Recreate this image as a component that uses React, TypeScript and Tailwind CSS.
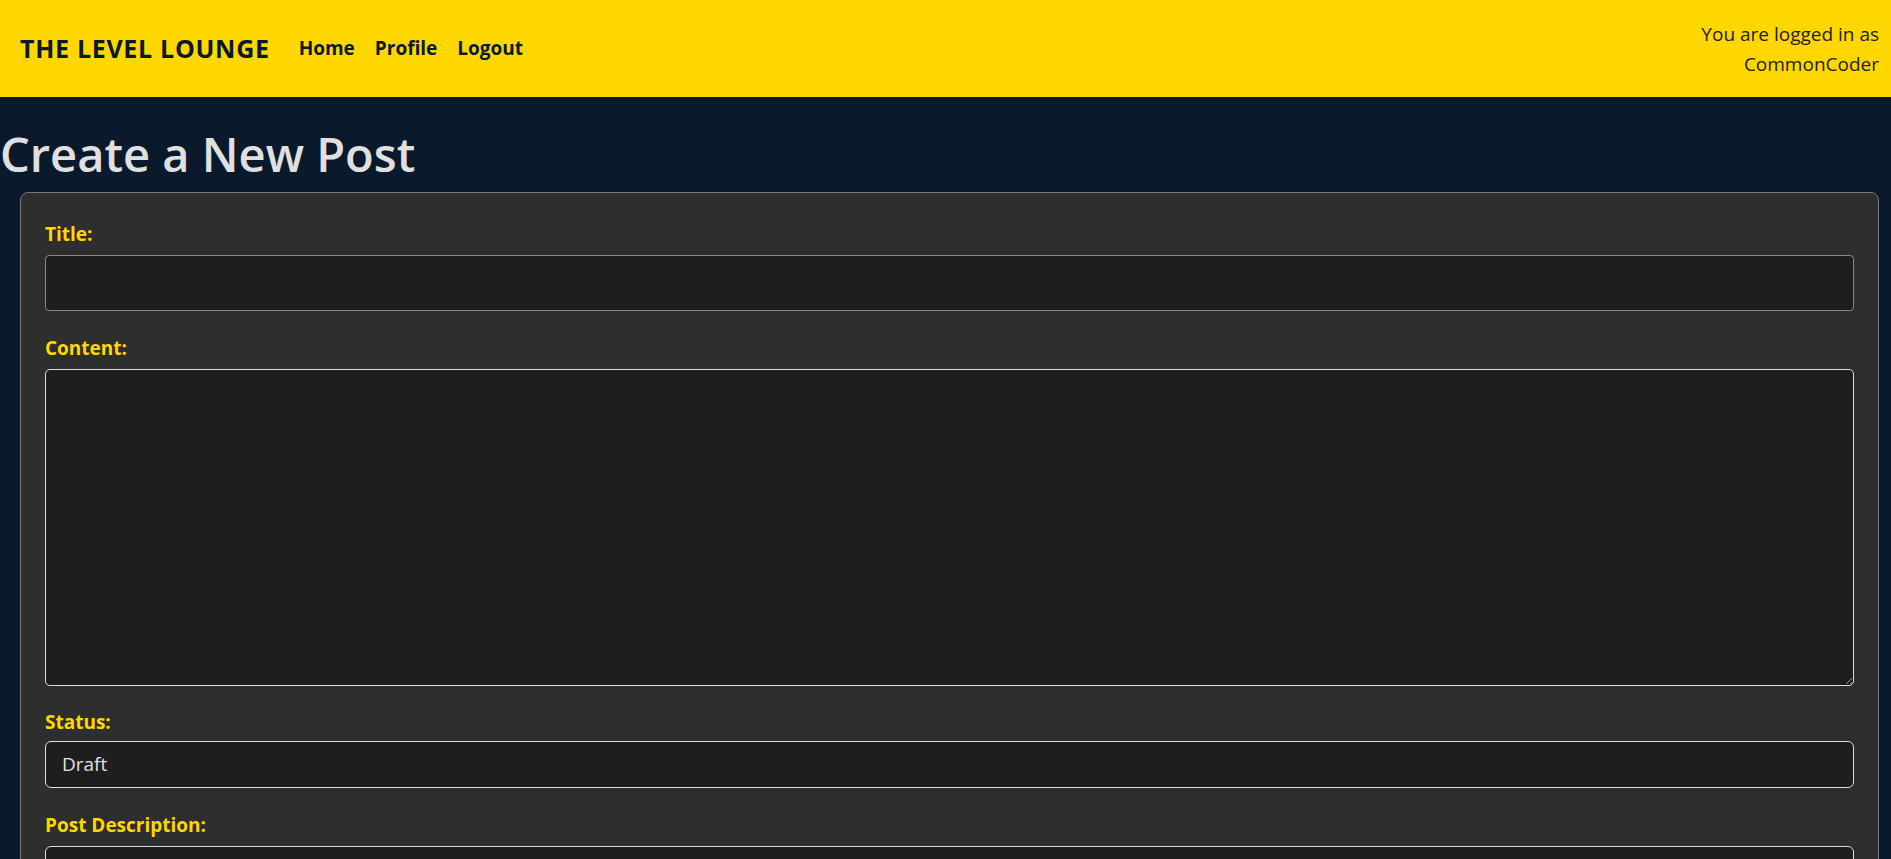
import React from "react";

const font = { fontFamily: '"Open Sans", "Noto Sans", sans-serif' };

function Label({ children, tight }: { children: React.ReactNode; tight?: boolean }) {
  return (
    <label
      className={
        tight
          ? "block text-[19px] leading-[24px] font-bold text-[#ffd700] mb-[7px]"
          : "block text-[19px] leading-[24px] font-bold text-[#ffd700] mb-[9px]"
      }
    >
      {children}
    </label>
  );
}

export default function App() {
  return (
    <div className="min-h-[859px] bg-[#0a192b] font-['Open_Sans','Noto_Sans',sans-serif]" style={font}>
      <header className="h-[97px] bg-[#ffd700] flex items-center justify-between pl-[20px] pr-[12px] text-[#0a192b]">
        <div className="flex items-center">
          <span className="text-[25px] font-bold tracking-[0.7px] mr-[29px]">THE LEVEL LOUNGE</span>
          <nav className="flex items-center gap-[20px] text-[19px] font-bold">
            <a>Home</a>
            <a>Profile</a>
            <a>Logout</a>
          </nav>
        </div>
        <div className="text-right text-[19px] leading-[30px] text-[#222]">
          <div>You are logged in as</div>
          <div>CommonCoder</div>
        </div>
      </header>
      <h1 className="text-[47px] leading-[60px] font-semibold text-[#e0e0e0] mt-[27px] mb-[8px]">
        Create a New Post
      </h1>
      <div className="ml-[20px] mr-[12px] bg-[#2e2e2e] border border-[#777] rounded-[8px] px-[24px] pt-[29px] pb-[40px]">
        <Label>Title:</Label>
        <input className="block w-full h-[56px] bg-[#1e1e1e] border border-[#888] rounded-[4px] px-[12px] text-[#e0e0e0] mb-[25px] outline-none" />
        <Label>Content:</Label>
        <textarea className="block w-full h-[317px] bg-[#1e1e1e] border border-[#ddd] rounded-[5px] px-[12px] text-[#e0e0e0] mb-[24px] outline-none" />
        <Label tight>Status:</Label>
        <div className="w-full h-[47px] bg-[#1e1e1e] border border-[#ddd] rounded-[6px] px-[16px] flex items-center text-[19px] text-[#e0e0e0] mb-[25px]">
          Draft
        </div>
        <Label>Post Description:</Label>
        <textarea className="block w-full h-[100px] bg-[#1e1e1e] border border-[#ddd] rounded-[6px] px-[12px] text-[#e0e0e0] outline-none" />
      </div>
    </div>
  );
}
